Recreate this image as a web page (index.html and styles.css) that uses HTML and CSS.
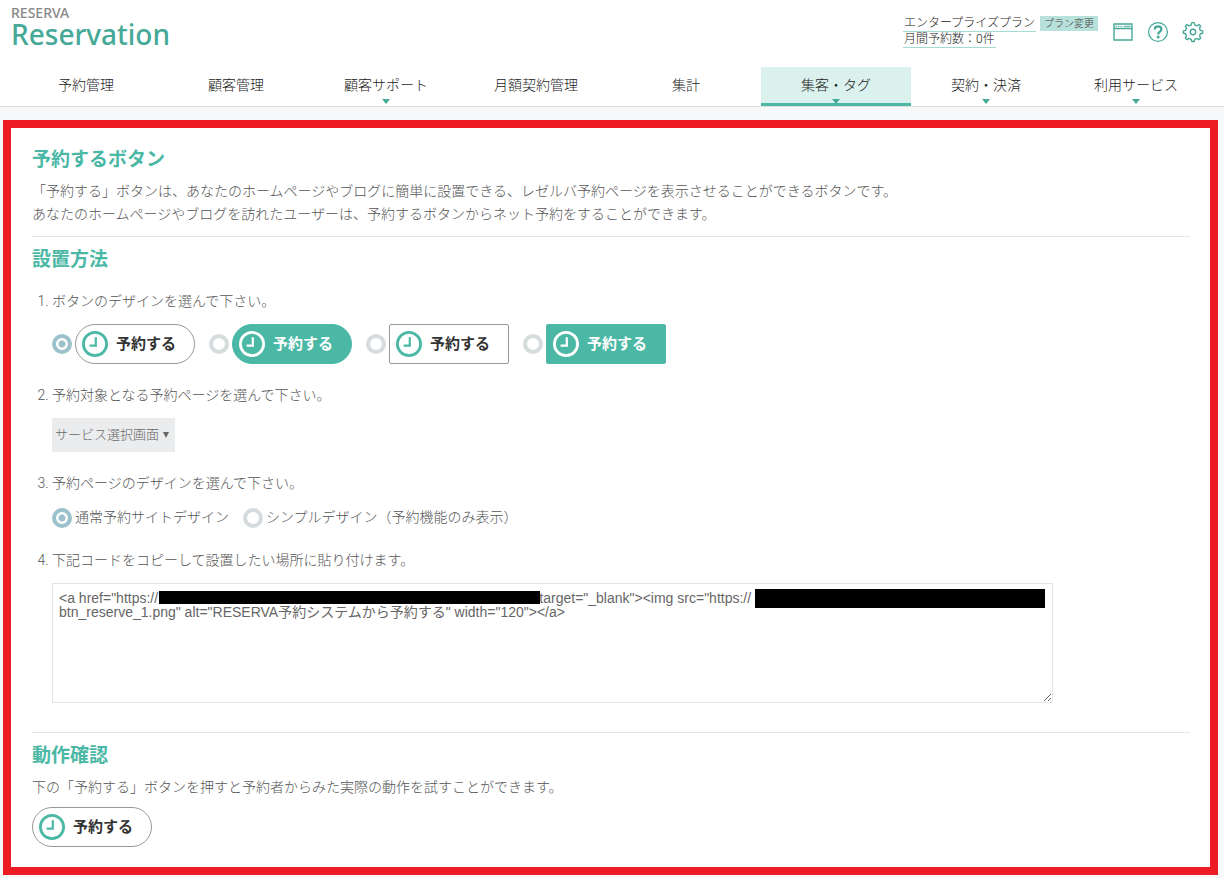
FILE: index.html
```html
<!DOCTYPE html>
<html lang="ja">
<head>
<meta charset="utf-8">
<meta name="viewport" content="width=device-width, initial-scale=1">
<title>RESERVA Reservation</title>
<link rel="stylesheet" href="styles.css">
</head>
<body>
<svg class="sprite" aria-hidden="true">
  <symbol id="clock" viewBox="0 0 26 26">
    <circle cx="13" cy="13" r="11.6" fill="none" stroke="currentColor" stroke-width="2.8"/>
    <path d="M13.8 6.300v8.300H7.600" fill="none" stroke="currentColor" stroke-width="2.200"/>
  </symbol>
</svg>

<header class="header">
  <div class="topbar">
    <a class="logo" href="#"><span class="logo-small">RESERVA</span><span class="logo-large">Reservation</span></a>
    <div class="account">
      <div class="plan">
        <span class="plan-line">エンタープライズプラン</span>
        <span class="plan-line">月間予約数：0件</span>
      </div>
      <a class="plan-change" href="#">プラン変更</a>
      <div class="tools">
        <a class="tool" href="#" aria-label="予約サイト">
          <svg viewBox="0 0 22 22"><path d="M2 3h18v16H2zM2 7.5h18" fill="none" stroke="currentColor" stroke-width="1.4"/><path d="M3.5 5.3h1.5M6 5.3h1.5M8.5 5.3H10M11.5 5.3h7" stroke="currentColor" stroke-width="1"/></svg>
        </a>
        <a class="tool" href="#" aria-label="ヘルプ">
          <svg viewBox="0 0 22 22"><circle cx="11" cy="11" r="9.4" fill="none" stroke="currentColor" stroke-width="1.3"/><path d="M7.800 8.600c0-2 1.400-3.200 3.300-3.200s3.200 1.200 3.200 3c0 2.300-3.100 2.400-3.100 5" fill="none" stroke="currentColor" stroke-width="2.300"/><circle cx="11.200" cy="16.100" r="1.500" fill="currentColor"/></svg>
        </a>
        <a class="tool" href="#" aria-label="設定">
          <svg viewBox="0 0 22 22"><path d="M9.300 3.800 9.800 1.600h2.400l.5 2.200 2.300 1 2-1.300 1.700 1.700-1.200 2 .9 2.200 2.200.5v2.300l-2.200.5-.9 2.200 1.200 2-1.700 1.700-2-1.200-2.300.9-.5 2.200H9.800l-.5-2.200-2.300-.9-2 1.200-1.700-1.700 1.200-2-.9-2.200-2.200-.5V9.900l2.200-.5.900-2.200-1.200-2L5 3.500l2 1.300z" fill="none" stroke="currentColor" stroke-width="1.400" stroke-linejoin="round"/><circle cx="11" cy="11" r="2.700" fill="none" stroke="currentColor" stroke-width="1.400"/></svg>
        </a>
      </div>
    </div>
  </div>
  <nav class="nav">
    <a class="nav-item" href="#">予約管理</a>
    <a class="nav-item" href="#">顧客管理</a>
    <a class="nav-item has-menu" href="#">顧客サポート</a>
    <a class="nav-item" href="#">月額契約管理</a>
    <a class="nav-item" href="#">集計</a>
    <a class="nav-item has-menu active" href="#" aria-current="page">集客・タグ</a>
    <a class="nav-item has-menu" href="#">契約・決済</a>
    <a class="nav-item has-menu" href="#">利用サービス</a>
  </nav>
</header>

<main class="panel">
  <section class="section">
    <h1 class="heading">予約するボタン</h1>
    <p class="text">「予約する」ボタンは、あなたのホームページやブログに簡単に設置できる、レゼルバ予約ページを表示させることができるボタンです。<br>あなたのホームページやブログを訪れたユーザーは、予約するボタンからネット予約をすることができます。</p>
  </section>

  <section class="section setup">
    <h2 class="heading">設置方法</h2>
    <ol class="steps">
      <li class="step">
        <p class="step-title">ボタンのデザインを選んで下さい。</p>
        <div class="choices">
          <label class="choice"><input class="radio" type="radio" name="button-design" checked><span class="reserve pill"><svg class="clock"><use href="#clock"/></svg>予約する</span></label>
          <label class="choice"><input class="radio" type="radio" name="button-design"><span class="reserve pill solid"><svg class="clock"><use href="#clock"/></svg>予約する</span></label>
          <label class="choice"><input class="radio" type="radio" name="button-design"><span class="reserve"><svg class="clock"><use href="#clock"/></svg>予約する</span></label>
          <label class="choice"><input class="radio" type="radio" name="button-design"><span class="reserve solid"><svg class="clock"><use href="#clock"/></svg>予約する</span></label>
        </div>
      </li>
      <li class="step">
        <label class="step-title" for="target-page">予約対象となる予約ページを選んで下さい。</label>
        <div class="select-wrap">
          <select class="select" id="target-page"><option>サービス選択画面</option></select>
        </div>
      </li>
      <li class="step">
        <p class="step-title">予約ページのデザインを選んで下さい。</p>
        <div class="choices">
          <label class="choice"><input class="radio" type="radio" name="page-design" checked>通常予約サイトデザイン</label>
          <label class="choice"><input class="radio" type="radio" name="page-design">シンプルデザイン（予約機能のみ表示）</label>
        </div>
      </li>
      <li class="step">
        <label class="step-title" for="embed-code">下記コードをコピーして設置したい場所に貼り付けます。</label>
        <div class="code-wrap">
          <textarea class="code" id="embed-code" spellcheck="false">&lt;a href="https://                                                                                                  target="_blank"&gt;&lt;img src="https://
btn_reserve_1.png" alt="RESERVA予約システムから予約する" width="120"&gt;&lt;/a&gt;</textarea>
          <span class="mask mask-link"></span>
          <span class="mask mask-image"></span>
        </div>
      </li>
    </ol>
  </section>

  <section class="section">
    <h2 class="heading">動作確認</h2>
    <p class="text">下の「予約する」ボタンを押すと予約者からみた実際の動作を試すことができます。</p>
    <a class="reserve pill try" href="#"><svg class="clock"><use href="#clock"/></svg>予約する</a>
  </section>
</main>
</body>
</html>
```

FILE: styles.css
```css
:root {
  --teal: #4bb8a6;
  --teal-dark: #46a998;
  --line: #e0e6eb;
  --text: #555;
}

* {
  box-sizing: border-box;
}

body {
  margin: 0;
  background: #f7f8fa;
  color: var(--text);
  font: 300 14px/23px Roboto, "Noto Sans CJK JP", sans-serif;
}

a {
  color: inherit;
  text-decoration: none;
}

h1,
h2,
p,
ol {
  margin: 0;
}

.sprite {
  display: none;
}

/* Header */

.header {
  background: #fff;
  border-bottom: 1px solid #ddd;
}

.topbar {
  display: flex;
  justify-content: space-between;
  height: 67px;
  padding: 5px 20px 0 11px;
}

.logo {
  display: flex;
  flex-direction: column;
  font-family: "Noto Sans", sans-serif;
}

.logo-small {
  color: #888;
  font-size: 14px;
  font-weight: 500;
  line-height: 15px;
}

.logo-large {
  color: var(--teal-dark);
  font-size: 28px;
  font-weight: 500;
  line-height: 28px;
}

.account {
  display: flex;
  align-items: flex-start;
  padding-top: 11px;
}

.plan {
  display: flex;
  flex-direction: column;
  align-items: flex-start;
  color: #222;
  font-size: 12px;
  line-height: 15px;
}

.plan-line {
  padding: 0 1px;
  border-bottom: 1px solid #a5dbd2;
}

.plan-change {
  margin-left: 4px;
  padding: 0 4px;
  background: #b7e1da;
  color: #444;
  font-size: 10px;
  line-height: 15px;
}

.tools {
  display: flex;
  gap: 13px;
  margin: 5px 0 0 14px;
}

.tool,
.tool svg {
  display: block;
  width: 22px;
  height: 22px;
  color: var(--teal-dark);
}

.nav {
  display: grid;
  grid-template-columns: repeat(8, 1fr);
  padding: 0 13px 0 11px;
}

.nav-item {
  position: relative;
  height: 39px;
  padding-top: 7px;
  color: #222;
  text-align: center;
}

.nav-item.active {
  background: #daf1ed;
  border-bottom: 3px solid var(--teal);
}

.has-menu::after {
  content: "";
  position: absolute;
  top: 32px;
  left: 50%;
  margin-left: -4px;
  border: 4px solid transparent;
  border-top: 5px solid var(--teal-dark);
  border-bottom: 0;
}

/* Content */

.panel {
  margin: 13px 6px 3px 3px;
  padding: 19px 20px 20px 21px;
  border: 8px solid #ed1c24;
  background: #fff;
}

.section + .section {
  margin-top: 10px;
  padding-top: 10px;
  border-top: 1px solid var(--line);
}

.heading {
  margin-bottom: 8px;
  color: var(--teal);
  font-size: 19px;
  font-weight: 700;
  line-height: 25px;
}

.setup {
  padding-bottom: 19px;
}

.steps {
  display: grid;
  gap: 20px;
  margin-top: 18px;
  padding-left: 20px;
}

.step-title {
  display: block;
  margin-bottom: 11px;
}

.choices {
  display: flex;
  flex-wrap: wrap;
  gap: 14px;
}

.choice {
  display: flex;
  align-items: center;
  gap: 3px;
}

.radio {
  appearance: none;
  flex: none;
  width: 20px;
  height: 20px;
  margin: 0;
  border: 4px solid #d6dcde;
  border-radius: 50%;
  background: #fff;
}

.radio:checked {
  border-color: #9bc2cc;
  background: radial-gradient(circle, #9bc2cc 3px, #fff 4px);
}

.reserve {
  display: flex;
  align-items: center;
  gap: 8px;
  width: 120px;
  height: 40px;
  padding: 0 6px;
  border: 1px solid #999;
  border-radius: 2px;
  background: #fff;
  color: #333;
  font-size: 15px;
  font-weight: 700;
  white-space: nowrap;
}

.pill {
  border-radius: 20px;
}

.solid {
  border-color: var(--teal);
  background: var(--teal);
  color: #fff;
}

.try {
  margin-top: 8px;
}

.clock {
  flex: none;
  width: 26px;
  height: 26px;
  color: var(--teal);
}

.solid .clock {
  color: #fff;
}

.select-wrap {
  position: relative;
  width: 123px;
  height: 34px;
}

.select-wrap::after {
  content: "";
  position: absolute;
  top: 14px;
  right: 6px;
  border: 3px solid transparent;
  border-top: 6px solid #666;
  border-bottom: 0;
  pointer-events: none;
}

.select {
  appearance: none;
  width: 100%;
  height: 100%;
  padding: 0 0 2px 3px;
  border: 0;
  border-radius: 0;
  background: #ebecee;
  color: #666;
  font: inherit;
  font-size: 13px;
}

.code-wrap {
  position: relative;
  max-width: 1001px;
}

.code {
  display: block;
  width: 100%;
  height: 120px;
  padding: 7px 6px;
  border: 1px solid var(--line);
  background: #fff;
  color: #666;
  font: 14px/14px "Liberation Sans", "Noto Sans CJK JP", sans-serif;
}

/* Redaction bars over the addresses */
.mask {
  position: absolute;
  background: #000;
}

.mask-link {
  top: 8px;
  left: 107px;
  width: 381px;
  height: 13px;
}

.mask-image {
  top: 6px;
  left: 703px;
  width: 290px;
  height: 19px;
}
```
